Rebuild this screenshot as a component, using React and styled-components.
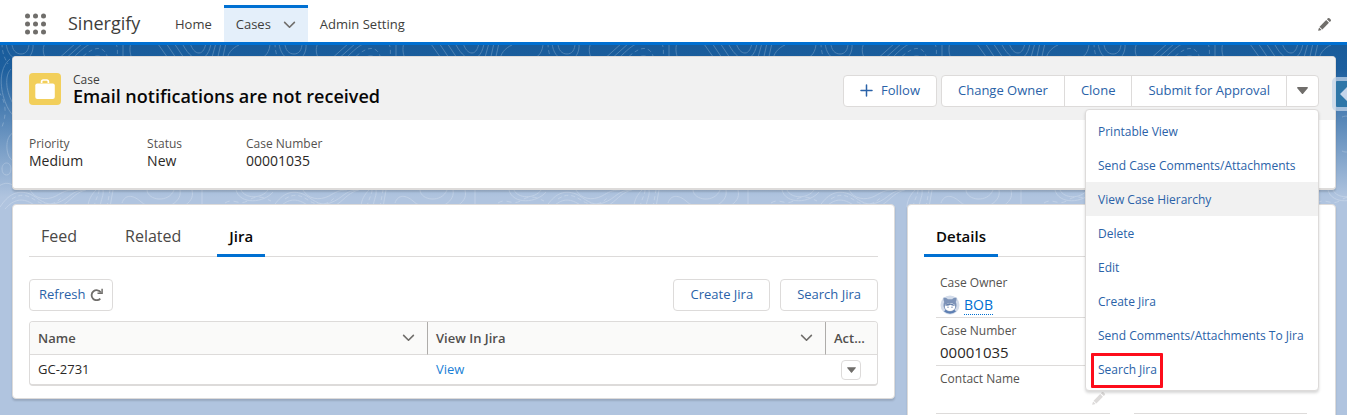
import React from "react";
import styled, { createGlobalStyle } from "styled-components";

const GlobalStyle = createGlobalStyle`
    * {
        box-sizing: border-box;
    }
    body {
        margin: 0;
        background: #b0c4df;
        color: #080707;
        font-family: "Open Sans", "Noto Sans", sans-serif;
        font-size: 13px;
        overflow: hidden;
    }
    button {
        font-family: inherit;
    }
    a {
        text-decoration: none;
    }
`;

const Page = styled.div`
    position: relative;
    height: 100vh;
    overflow: hidden;
`;

//HEADER
const NavBar = styled.header`
    display: flex;
    align-items: stretch;
    height: 45px;
    padding: 0 16px 0 25px;
    background: #fff;
    border-bottom: 3px solid #0070d2;
`;
const Launcher = styled.button`
    display: flex;
    align-items: center;
    padding: 5px 0 0;
    border: 0;
    background: none;
`;
const AppName = styled.div`
    width: 95px;
    margin-left: 22px;
    padding-top: 5px;
    font-size: 18px;
    line-height: 37px;
    color: #3e3e3c;
`;
const NavLinks = styled.nav`
    display: flex;
    flex: 1;
    padding-top: 5px;
`;
const NavItem = styled.div`
    display: flex;
    align-items: center;
    gap: 12px;
    height: 37px;
    padding: 0 12px 3px;
    border-top: 3px solid ${p => (p.$active ? "#0070d2" : "transparent")};
    background: ${p => (p.$active ? "#e4effa" : "transparent")};
`;
const NavLink = styled.a`
    color: #3e3e3c;
    font-size: 13px;
`;
const IconButton = styled.button`
    display: flex;
    align-items: center;
    padding: 0;
    border: 0;
    background: none;
`;
const ListButton = styled(IconButton)`
    padding-top: 3px;
`;
const EditNav = styled(IconButton)`
    padding-top: 7px;
`;

//BACKGROUND
const Backdrop = styled.div`
    position: absolute;
    top: 45px;
    left: 0;
    right: 0;
    height: 190px;
    background: linear-gradient(#195c9b 0, #1d5f9e 24px, #b0c4df 152px);
`;
const Content = styled.main`
    position: relative;
    padding: 11px 11px 0 12px;
`;
const Card = styled.section`
    background: #fff;
    border: 1px solid #dddbda;
    border-radius: 4px;
    box-shadow: 0 2px 2px rgba(0, 0, 0, 0.14);
`;

//RECORD HEADER
const RecordCard = styled(Card)`
    margin-bottom: 14px;
    border-bottom-width: 2px;
`;
const RecordHead = styled.div`
    display: flex;
    align-items: flex-start;
    height: 63px;
    padding: 16px 16px 0;
    background: #f1f1f1;
    border-radius: 3px 3px 0 0;
`;
const RecordTitle = styled.div`
    flex: 1;
    margin-left: 12px;
`;
const RecordType = styled.div`
    font-size: 12px;
    line-height: 13px;
    color: #3e3e3c;
`;
const RecordName = styled.h1`
    margin: 0;
    font-size: 18px;
    line-height: 20px;
    font-weight: 600;
`;
const Actions = styled.div`
    position: relative;
    display: flex;
    padding-top: 2px;
`;
const Button = styled.button`
    display: flex;
    align-items: center;
    justify-content: center;
    gap: ${p => p.$gap || 8}px;
    height: 32px;
    padding: 0 ${p => p.$pad || 16}px 2px;
    border: 1px solid #dddbda;
    border-radius: 4px;
    background: #fff;
    color: #2a62a8;
    font-size: 13px;
    white-space: nowrap;
`;
const ButtonGroup = styled.div`
    position: relative;
    z-index: 2;
    display: flex;
    margin-left: 4px;

    ${Button} {
        border-radius: 0;
        margin-left: -1px;
    }
    ${Button}:first-child {
        border-radius: 4px 0 0 4px;
        margin-left: 0;
    }
    ${Button}:last-of-type {
        border-radius: 0 4px 4px 0;
    }
`;
const Menu = styled.ul`
    position: absolute;
    top: 34px;
    right: 0;
    width: 234px;
    margin: 0;
    padding: 4px 0;
    list-style: none;
    background: #fff;
    border: 1px solid #dddbda;
    border-radius: 4px;
    box-shadow: 0 2px 3px rgba(0, 0, 0, 0.16);
`;
const MenuItem = styled.li`
    position: relative;
    display: flex;
    align-items: center;
    height: 34px;
    padding: 0 12px;
    background: ${p => (p.$hover ? "#f1f1f1" : "transparent")};
`;
const MenuLink = styled.a`
    color: #2a62a8;
    font-size: 12px;
    white-space: nowrap;
`;
const Highlight = styled.span`
    position: absolute;
    top: 1px;
    left: 5px;
    width: 72px;
    height: 35px;
    border: 3px solid #fd0d1b;
    border-radius: 1px;
    pointer-events: none;
`;
const Fields = styled.dl`
    display: flex;
    gap: 64px;
    height: 68px;
    margin: 0;
    padding: 16px 16px 0;
`;
const Label = styled.dt`
    font-size: 12px;
    line-height: 16px;
    color: #54524f;
`;
const Value = styled.dd`
    display: flex;
    align-items: center;
    margin: 0;
    font-size: ${p => p.$size || 15}px;
    line-height: 18px;
    color: #2b2826;
`;

//COLUMNS
const Columns = styled.div`
    display: grid;
    grid-template-columns: minmax(0, 883fr) minmax(0, 429fr);
    align-items: start;
    gap: 12px;
`;
const Panel = styled(Card)`
    padding: 16px 16px ${p => p.$bottom || 12}px;
`;
const Tabs = styled.div`
    display: flex;
    gap: 24px;
    border-bottom: 1px solid #dddbda;
`;
const Tab = styled.button`
    height: 36px;
    margin-bottom: -1px;
    padding: 0 12px 4px;
    border: 0;
    border-bottom: 3px solid ${p => (p.$active ? "#0070d2" : "transparent")};
    background: none;
    color: ${p => (p.$active ? "#080707" : "#4a4846")};
    font-size: ${p => (p.$active ? 15 : 16)}px;
    line-height: 28px;
    font-weight: ${p => (p.$active ? 600 : 400)};
`;
const Toolbar = styled.div`
    display: flex;
    gap: 10px;
    margin: 22px 0 10px;
`;
const Spacer = styled.div`
    flex: 1;
`;

//TABLE
const TableFrame = styled.div`
    border: 1px solid #dddbda;
    border-bottom-width: 2px;
    border-radius: 4px;
    overflow: hidden;
`;
const Table = styled.table`
    width: 100%;
    table-layout: fixed;
    border-collapse: separate;
    border-spacing: 0;
`;
const Th = styled.th`
    width: ${p => p.$width || "auto"};
    height: 33px;
    padding: 0 8px;
    text-align: left;
    font-size: 13px;
    font-weight: 600;
    color: #514f4d;
    background: #fafaf9;
    border-bottom: 1px solid #dddbda;
    border-right: ${p => (p.$last ? "0" : "1px solid #aeacaa")};
    white-space: nowrap;
`;
const ThInner = styled.div`
    display: flex;
    align-items: center;
    justify-content: space-between;
    padding-right: ${p => (p.$last ? 0 : 4)}px;
`;
const Td = styled.td`
    height: 29px;
    padding: 0 8px 1px;
    font-size: 13px;
    line-height: 18px;
    color: #2b2826;

    a {
        color: #1a7fd6;
    }
`;
const RowButton = styled.button`
    display: flex;
    align-items: center;
    justify-content: center;
    width: 20px;
    height: 20px;
    margin: 1px 0 0 7px;
    padding: 0;
    border: 1px solid #dddbda;
    border-radius: 4px;
    background: #fff;
`;

//DETAILS
const DetailGrid = styled.dl`
    display: grid;
    grid-template-columns: 1fr 1fr;
    column-gap: 24px;
    margin: 13px 12px 0;
`;
const Detail = styled.div`
    position: relative;
    height: 48px;
    padding: 5px 4px 0;
    border-bottom: 1px solid #dddbda;

    ${Value} {
        padding-top: 4px;
    }
`;
const OwnerLink = styled.a`
    margin-left: 4px;
    font-size: 14px;
    line-height: 18px;
    color: #0070d2;
    border-bottom: 1px dotted #0070d2;
`;
const DetailEdit = styled(IconButton)`
    position: absolute;
    right: 5px;
    bottom: 8px;
`;
const SidePanelToggle = styled.button`
    position: absolute;
    top: 32px;
    right: -16px;
    z-index: 3;
    display: flex;
    align-items: center;
    width: 31px;
    height: 34px;
    padding: 0 4px;
    border: 4px solid rgba(196, 213, 234, 0.75);
    border-radius: 5px;
    background: #2e76a8;
    background-clip: padding-box;
`;

const Chevron = () => (
    <svg width="13" height="8" viewBox="0 0 14 9" fill="none" stroke="#706e6b" strokeWidth="1.8" strokeLinecap="round" strokeLinejoin="round">
        <path d="M1.5 1.5 7 7l5.500-5.500" />
    </svg>
);

const Caret = ({ small }) => (
    <svg width={small ? 9 : 11} height={small ? 6 : 7} viewBox="0 0 11 7">
        <path d="M.8 0h9.400c.7 0 1 .7.5 1.200L6.100 6.700a.8.8 0 0 1-1.200 0L.3 1.200C-.1.700.1 0 .8 0z" fill="#706e6b" />
    </svg>
);

const Pencil = ({ color, size }) => (
    <svg width={size} height={size} viewBox="0 0 14 14" fill={color}>
        <path d="M1.700 9.300 8.800 2.200l3 3-7.100 7.100z" />
        <path d="M9.600 1.400 10.600.4a1.300 1.300 0 0 1 1.800 0l1.200 1.200a1.300 1.300 0 0 1 0 1.800l-1 1z" />
        <path d="M1.200 10.100.2 13.300c-.1.300.2.600.5.500l3.200-1z" />
    </svg>
);

const LauncherDots = () => (
    <svg width="21" height="22" viewBox="0 0 21 22" fill="#706e6b">
        {[2.500, 10.500, 18.500].map(y =>
            [2.500, 10.500, 18.500].map(x => <circle key={x + "-" + y} cx={x} cy={y + 0.5} r="2.500" />)
        )}
    </svg>
);

const CaseIcon = () => (
    <svg width="32" height="32" viewBox="0 0 32 32">
        <rect width="32" height="32" rx="4" fill="#f2cf5b" />
        <path d="M12.600 10V8.700c0-1 .8-1.700 1.700-1.700h3.400c1 0 1.700.8 1.700 1.700V10" fill="none" stroke="#fff" strokeWidth="1.700" />
        <rect x="6.300" y="10.500" width="19.500" height="15.500" rx="2" fill="#fff" />
    </svg>
);

const Plus = () => (
    <svg width="13" height="13" viewBox="0 0 13 13" stroke="#2a62a8" strokeWidth="1.500" strokeLinecap="round">
        <path d="M6.500 1v11M1 6.500h11" />
    </svg>
);

const RefreshIcon = () => (
    <svg width="13" height="13" viewBox="0 0 13 13" fill="none" stroke="#706e6b" strokeWidth="1.800">
        <path d="M10.300 10.600A5 5 0 1 1 10.800 4.500" />
        <path d="M12.100.8v4.500H7.500" strokeWidth="1.500" />
    </svg>
);

const Avatar = () => (
    <svg width="20" height="20" viewBox="0 0 20 20">
        <circle cx="10" cy="10" r="9.500" fill="#d3dcea" />
        <path d="M4 16.500c1.300-2 3.500-3 6-3s4.700 1 6 3a9.500 9.500 0 0 1-12 0z" fill="#5d7fb3" />
        <path d="M3.600 2.500c1.900 0 3.400.8 4.200 1.800h4.400c.8-1 2.300-1.800 4.200-1.800.4 2-.1 3.600-.7 4.600a6.500 6.500 0 1 1-11.400 0c-.6-1-1.100-2.600-.7-4.600z" fill="#7d93b8" />
        <ellipse cx="10" cy="12" rx="5.200" ry="4" fill="#fff" />
        <path d="M5.200 10.500C6.500 8.500 9 8 10.500 8.500c2 .3 3.600 1 4.300 2.200-1.800.3-3-.2-4.300-1-1.500.8-3.300 1.200-5.300.8z" fill="#6580ab" />
        <circle cx="8" cy="12.200" r=".6" fill="#4f6c9c" />
        <circle cx="12" cy="12.200" r=".6" fill="#4f6c9c" />
    </svg>
);

//TOPOGRAPHIC LINES, REPEATED ACROSS THE BACKDROP
const Contours = () => (
    <svg width="100%" height="180" fill="none" stroke="#fff" strokeWidth="1">
        <defs>
            <pattern id="contours" width="273" height="180" patternUnits="userSpaceOnUse">
                <g opacity=".22">
                    <path d="M6-2c1 9 5 16 14 17S34 8 33-2M12-2c0 7 4 11 9 11s8-4 8-11" />
                    <path d="M2-2c0 12 4 17 6 21" strokeDasharray="4 3" />
                    <path d="M45-2c-3 6-2 12 2 18M56 16 76-2M63 16 83-2M70 16C78 8 84 2 90-1" />
                    <path d="M78 16c8-8 18-16 25-11 4 3 4 7 6 11" strokeDasharray="4 3" />
                    <path d="M88 16c5-5 10-7 15-3M123-2v18M131-2c-2 6-1 12 2 18" />
                    <path d="M116-2c2 6 2 12 0 18" strokeDasharray="4 3" />
                    <path d="m158-1 12 17m-4-18 12 18m-4-18 12 18m-4-18c4 8 10 16 17 16s11-8 12-16M190-2c2 6 5 10 9 10s6-5 7-10" />
                    <path d="m211 16 5-18m1 18 4-18m1 18 4-18M227 16c0-7 5-13 12-16" />
                    <path d="M257 15c9-2 13-9 13-17" />
                    <path d="M10 14C-2 24 0 45 6 59c3 8 8 12 11 16M11 24C4 31 6 48 14 60" />
                    <path d="M-1 47c7 10 8 22 3 35" strokeDasharray="4 4" />
                    <path d="M18 87C8 86 5 99 8 109c2 7 8 9 13 5M2 124c0-8 9-8 9 0s-9 8-9 0M-1 141c6-4 12-4 18 3" />
                    <path d="M0 162c8-12 17-18 30-13 9 4 15 13 27 9 14-5 14-13 29-13M5 164c9-10 17-11 26-6 10 6 18 9 30 3 10-5 12-12 24-16M30 145c5 9 16 11 26 6 7-4 10-6 18-6" />
                    <path d="M12 154c9-6 15-4 23 1 10 7 21 5 28-4" strokeDasharray="4 3" />
                    <path d="M88 162c0-7 4-13 8-17M100 162c1-8 4-12 3-17M110 162l3-17" />
                    <path d="M94 162c1-7 5-12 5-17m8 17 3-17" strokeDasharray="4 3" />
                    <path d="M122 158c3-9 11-8 18-2 8 8 24 9 33 3 6-4 8-9 7-14M147 145c1 11 22 13 27 0M192 145c2 8-2 12-9 17M202 145v17" />
                    <path d="M225 158c9-6 14 4 24-3 8-5 14-3 22 1" strokeDasharray="5 4" />
                    <path d="M241 145c4 9 21 9 27 0M236 145c4 15 28 13 37 2" />
                    <path d="M258 20c8 5 14 15 15 28M250 72c10-4 16 6 16 18s-8 20-16 16M262 120c-8 6-3 14 9 16" />
                </g>
            </pattern>
        </defs>
        <rect width="100%" height="180" fill="url(#contours)" stroke="none" />
    </svg>
);

const menuItems = [
    "Printable View",
    "Send Case Comments/Attachments",
    "View Case Hierarchy",
    "Delete",
    "Edit",
    "Create Jira",
    "Send Comments/Attachments To Jira",
    "Search Jira",
];

const fields = [
    ["Priority", "Medium"],
    ["Status", "New"],
    ["Case Number", "00001035"],
];

const Header = () => (
    <NavBar>
        <Launcher aria-label="App Launcher">
            <LauncherDots />
        </Launcher>
        <AppName>Sinergify</AppName>
        <NavLinks>
            <NavItem>
                <NavLink href="#home">Home</NavLink>
            </NavItem>
            <NavItem $active>
                <NavLink href="#cases">Cases</NavLink>
                <ListButton aria-label="Cases list">
                    <Chevron />
                </ListButton>
            </NavItem>
            <NavItem>
                <NavLink href="#admin">Admin Setting</NavLink>
            </NavItem>
        </NavLinks>
        <EditNav aria-label="Edit navigation">
            <Pencil color="#706e6b" size={13} />
        </EditNav>
    </NavBar>
);

const ActionMenu = () => (
    <Menu>
        {menuItems.map(item => (
            <MenuItem key={item} $hover={item === "View Case Hierarchy"}>
                <MenuLink href="#action">{item}</MenuLink>
                {item === "Search Jira" && <Highlight />}
            </MenuItem>
        ))}
    </Menu>
);

const RecordHeader = () => (
    <RecordCard>
        <RecordHead>
            <CaseIcon />
            <RecordTitle>
                <RecordType>Case</RecordType>
                <RecordName>Email notifications are not received</RecordName>
            </RecordTitle>
            <Actions>
                <Button>
                    <Plus />
                    Follow
                </Button>
                <ButtonGroup>
                    <Button>Change Owner</Button>
                    <Button>Clone</Button>
                    <Button>Submit for Approval</Button>
                    <Button $pad={10} aria-label="More actions">
                        <Caret />
                    </Button>
                    <ActionMenu />
                </ButtonGroup>
            </Actions>
        </RecordHead>
        <Fields>
            {fields.map(([label, value]) => (
                <div key={label}>
                    <Label>{label}</Label>
                    <Value $size={14}>{value}</Value>
                </div>
            ))}
        </Fields>
    </RecordCard>
);

const JiraPanel = () => (
    <Panel>
        <Tabs>
            <Tab>Feed</Tab>
            <Tab>Related</Tab>
            <Tab $active>Jira</Tab>
        </Tabs>
        <Toolbar>
            <Button $pad={9} $gap={5}>
                Refresh
                <RefreshIcon />
            </Button>
            <Spacer />
            <Button>Create Jira</Button>
            <Button>Search Jira</Button>
        </Toolbar>
        <TableFrame>
            <Table>
                <thead>
                    <tr>
                        <Th>
                            <ThInner>
                                Name
                                <Chevron />
                            </ThInner>
                        </Th>
                        <Th>
                            <ThInner>
                                View In Jira
                                <Chevron />
                            </ThInner>
                        </Th>
                        <Th $width="51px" $last>
                            <ThInner $last>Act...</ThInner>
                        </Th>
                    </tr>
                </thead>
                <tbody>
                    <tr>
                        <Td>GC-2731</Td>
                        <Td>
                            <a href="#view">View</a>
                        </Td>
                        <Td>
                            <RowButton aria-label="Row actions">
                                <Caret small />
                            </RowButton>
                        </Td>
                    </tr>
                </tbody>
            </Table>
        </TableFrame>
    </Panel>
);

const DetailsPanel = () => (
    <Panel $bottom={24}>
        <Tabs>
            <Tab $active>Details</Tab>
        </Tabs>
        <DetailGrid>
            <Detail>
                <Label>Case Owner</Label>
                <Value>
                    <Avatar />
                    <OwnerLink href="#bob">BOB</OwnerLink>
                </Value>
            </Detail>
            <Detail />
            <Detail>
                <Label>Case Number</Label>
                <Value>00001035</Value>
            </Detail>
            <Detail />
            <Detail>
                <Label>Contact Name</Label>
                <DetailEdit aria-label="Edit Contact Name">
                    <Pencil color="#dddbda" size={13} />
                </DetailEdit>
            </Detail>
            <Detail />
        </DetailGrid>
    </Panel>
);

class App extends React.Component {
    render() {
        return (
            <Page>
                <GlobalStyle />
                <Backdrop>
                    <Contours />
                </Backdrop>
                <Header />
                <Content>
                    <RecordHeader />
                    <Columns>
                        <JiraPanel />
                        <DetailsPanel />
                    </Columns>
                    <SidePanelToggle aria-label="Open side panel">
                        <svg width="12" height="14" viewBox="0 0 12 14">
                            <path d="M0 7 7 0v4.500h5v5H7V14z" fill="#c4d5ea" />
                        </svg>
                    </SidePanelToggle>
                </Content>
            </Page>
        );
    }
}

export default App;
